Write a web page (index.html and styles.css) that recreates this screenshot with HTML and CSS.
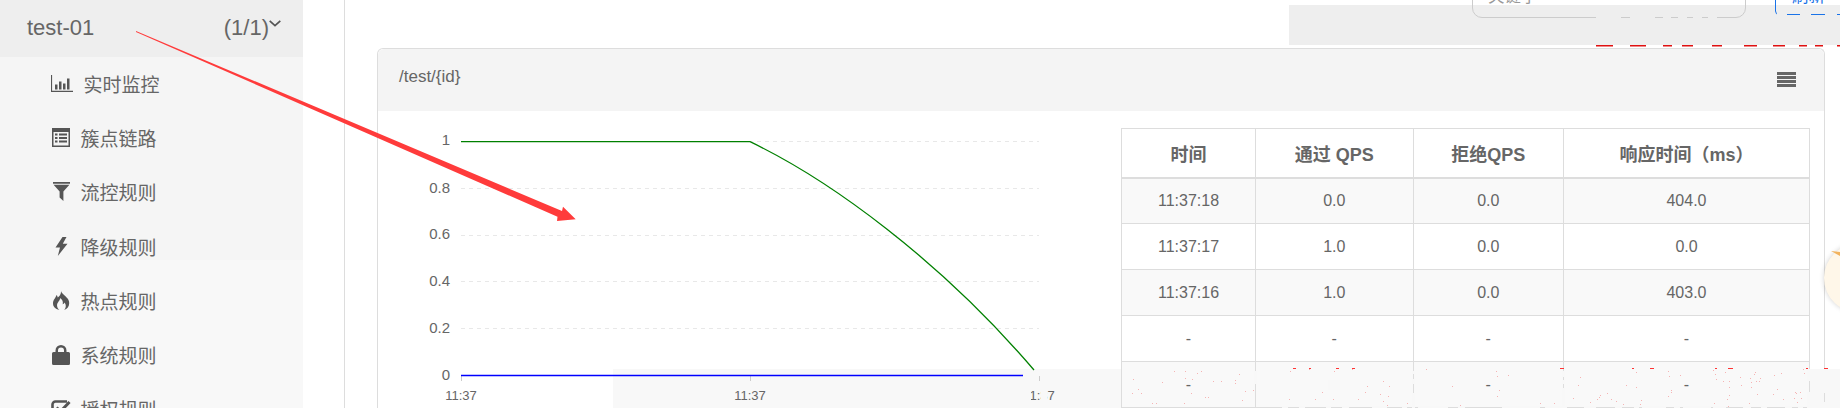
FILE: index.html
```html
<!DOCTYPE html>
<html lang="zh-CN">
<head>
<meta charset="utf-8">
<title>test-01</title>
<link rel="stylesheet" href="styles.css">
</head>
<body>
<div class="app">
  <aside class="sidebar">
    <div class="side-head">
      <span>test-01</span>
      <span class="side-count">(1/1)<svg class="chevron" width="12" height="7" viewBox="0 0 12 7"><path d="M.7.9 6 5.7 11.3.9" fill="none" stroke="#555" stroke-width="1.7"/></svg></span>
    </div>
    <nav class="side-nav">
      <a class="item item-wide"><span class="ico"><svg width="22" height="17" viewBox="0 0 22 17"><path d="M0 0h1.1v15.7H22V17H0zM4 9.500h2.500v5H4zM8 6.500h2.500v8H8zM12 8.500h2.500v6H12zM16 3.500h2.500v11H16z" fill="#555"/></svg></span><span class="label">实时监控</span></a>
      <a class="item"><span class="ico"><svg width="18" height="19" viewBox="0 0 18 19"><path fill-rule="evenodd" d="M0 0h18v19H0zM1.500 4v13.500h15V4zM3 5.500h2.500v2H3zM7 5.500h8v2H7zM3 9h2.500v2H3zM7 9h8v2H7zM3 12.500h2.500v2H3zM7 12.500h8v2H7z" fill="#555"/></svg></span><span class="label">簇点链路</span></a>
      <a class="item"><span class="ico"><svg width="17" height="19" viewBox="0 0 17 19"><path d="M0 0h17v1.800H0zM.6 2.800h15.800L10.400 9.500V19L6.600 15.500V9.500z" fill="#555"/></svg></span><span class="label">流控规则</span></a>
      <a class="item"><span class="ico"><svg width="13" height="19" viewBox="0 0 13 19"><path d="M7.500 0 .5 10.500H5L2.800 19 12.500 6.800H7.800L11.500 0z" fill="#555"/></svg></span><span class="label">降级规则</span></a>
      <a class="item"><span class="ico"><svg width="17" height="19" viewBox="0 0 17 19"><path fill-rule="evenodd" d="M8 0c1 3.500 5.500 5 7.500 9 1.800 4 0 8.500-4.500 10 2-2 2.500-5 .6-7.500-.5 1-1.100 1.500-2 1.800.8-2.500-.4-5-2.500-6.300.2 2.500-3.500 4.500-3 8 .2 1.800 1 3 2.400 4C2 18 0 15.500 0 12.500 0 8.500 2.800 7 3.500 4c.8.700 1.100 1.500 1.200 2.500C6.500 5 8.300 3 8 0z" fill="#555"/></svg></span><span class="label">热点规则</span></a>
      <a class="item"><span class="ico"><svg width="18" height="20" viewBox="0 0 18 20"><path fill-rule="evenodd" d="M3.500 7V5.500a5.500 5.500 0 0 1 11 0V7H16.500a1.500 1.500 0 0 1 1.500 1.500v10a1.500 1.500 0 0 1-1.500 1.500h-15A1.500 1.500 0 0 1 0 18.500v-10A1.500 1.500 0 0 1 1.500 7zM6 7h6V5.500a3 3 0 0 0-6 0z" fill="#555"/></svg></span><span class="label">系统规则</span></a>
      <a class="item"><span class="ico"><svg width="20" height="19" viewBox="0 0 20 19"><path d="M16 2.500H4.500A3 3 0 0 0 1.500 5.500v9a3 3 0 0 0 3 3h9a3 3 0 0 0 3-3V10" fill="none" stroke="#555" stroke-width="2.600"/><path d="M5.500 8.500 9.500 12.500 18.500 3" fill="none" stroke="#555" stroke-width="3"/></svg></span><span class="label">授权规则</span></a>
    </nav>
  </aside>

  <main class="main">
    <div class="toolbar">
      <div class="search"><span class="clip">关键字</span></div>
      <div class="refresh"><span class="clip">刷新</span></div>
    </div>
    <section class="panel">
      <header class="panel-head">
        <span class="panel-title">/test/{id}</span>
        <span class="burger"><i></i><i></i><i></i><i></i></span>
      </header>
      <div class="panel-body">
        <svg class="chart" width="743" height="297" viewBox="378 111 743 297">
          <g class="grid">
            <path d="M461 141.500H1039M461 188.500H1039M461 235.500H1039M461 281.500H1039M461 328.500H1039"/>
          </g>
          <path class="tick" d="M461.500 376v5M750.500 376v5M1039.500 376v5"/>
          <g class="ylabels">
            <text x="450" y="145">1</text>
            <text x="450" y="193">0.8</text>
            <text x="450" y="239">0.6</text>
            <text x="450" y="286">0.4</text>
            <text x="450" y="333">0.2</text>
            <text x="450" y="380">0</text>
          </g>
          <g class="xlabels">
            <text x="461" y="400">11:37</text>
            <text x="750" y="400">11:37</text>
            <text x="1039" y="400">11:37</text>
          </g>
          <path class="pass" d="M461 141.700H750C830 180 940 260 1034 370"/>
          <path class="block" d="M461 375.500H1023"/>
        </svg>
        <table class="stats">
          <colgroup><col class="c1"><col class="c2"><col class="c3"><col class="c4"></colgroup>
          <thead>
            <tr><th>时间</th><th>通过 QPS</th><th>拒绝QPS</th><th>响应时间（ms）</th></tr>
          </thead>
          <tbody>
            <tr class="odd"><td>11:37:18</td><td>0.0</td><td>0.0</td><td>404.0</td></tr>
            <tr><td>11:37:17</td><td>1.0</td><td>0.0</td><td>0.0</td></tr>
            <tr class="odd"><td>11:37:16</td><td>1.0</td><td>0.0</td><td>403.0</td></tr>
            <tr><td>-</td><td>-</td><td>-</td><td>-</td></tr>
            <tr class="odd"><td>-</td><td>-</td><td>-</td><td>-</td></tr>
          </tbody>
        </table>
      </div>
    </section>
  </main>

  <div class="shade-top"></div>
  <div class="shade-bottom"></div>
  <div class="bubble"></div>

  <svg class="marks" width="1840" height="408" viewBox="0 0 1840 408">
    <path class="gap-top" d="M1596 16h25v3h-25zM1630 16h25v3h-25zM1663 16h8v3h-8zM1678 16h9v3h-9zM1693 16h9v3h-9zM1708 16h9v3h-9zM1777 13h10v3h-10zM1800 13h11v3h-11zM1825 13h12v3h-12z"/>
    <path class="red" d="M1596 45h17v1.500h-17zM1630 45h16v1.500h-16zM1663 45h9v1.500h-9zM1682 45h11v1.500h-11zM1712 45h10v1.500h-10zM1744 45h13v1.500h-13zM1773 45h12v1.500h-12zM1799 45h8v1.500h-8zM1815 45h8v1.500h-8zM1837 45h3v1.500h-3z"/>
    <path class="gap-low" d="M1254 371h3v13h-3zM1412 371h3v3h-3zM1412 379h3v5h-3zM1412 393h3v15h-3zM1562 371h3v6h-3zM1562 380h3v4h-3zM1562 388h3v20h-3zM1807 369h3v12h-3zM1807 392h3v16h-3zM1328 380h12v10h-12zM1022 388h9v14h-9zM1041 388h6v14h-6zM1282 406h6v2h-6zM1299 406h6v2h-6zM1326 406h5v2h-5zM1342 406h7v2h-7zM1372 406h15v2h-15zM1402 406h5v2h-5zM1418 406h30v2h-30zM1458 406h7v2h-7zM1502 406h38v2h-38zM1545 406h22v2h-22zM1584 406h12v2h-12zM1615 406h7v2h-7zM1634 406h5v2h-5zM1642 406h24v2h-24zM1674 406h6v2h-6zM1683 406h28v2h-28zM1713 406h13v2h-13zM1743 406h8v2h-8zM1761 406h6v2h-6zM1785 406h7v2h-7zM1798 406h5v2h-5z"/>
    <path class="frag" d="M1824 393h1v9h-1z"/>
    <path class="red-low" d="M1293 368h3v1h-3zM1309 368h2v1h-2zM1336 368h3v1h-3zM1352 368h3v1h-3zM1560 368h4v1h-4zM1632 368h2v1h-2zM1650 368h4v1h-4zM1715 368h2v1h-2zM1728 368h5v1h-5zM1806 368h2v1h-2zM1824 368h4v1h-4z"/>
    <path class="dots" d="M1580 377h1v1h-1zM1578 385h1v1h-1zM1636 372h1v1h-1zM1626 385h1v1h-1zM1636 387h1v1h-1zM1668 371h1v1h-1zM1669 376h1v1h-1zM1680 375h1v1h-1zM1671 392h1v1h-1zM1671 390h1v1h-1zM1668 396h1v1h-1zM1641 400h1v1h-1zM1640 404h1v1h-1zM1623 404h1v1h-1zM1616 401h1v1h-1zM1611 399h1v1h-1zM1607 393h1v1h-1zM1600 395h1v1h-1zM1599 397h1v1h-1zM1597 399h1v1h-1zM1590 402h1v1h-1zM1573 398h1v1h-1zM1713 370h1v1h-1zM1715 374h1v1h-1zM1716 379h1v1h-1zM1725 372h1v1h-1zM1723 381h1v1h-1zM1729 381h1v1h-1zM1729 387h1v1h-1zM1729 395h1v1h-1zM1727 399h1v1h-1zM1714 403h1v1h-1zM1728 406h1v1h-1zM1741 385h1v1h-1zM1740 377h1v1h-1zM1749 403h1v1h-1zM1750 378h1v1h-1zM1751 382h1v1h-1zM1751 387h1v1h-1zM1754 374h1v1h-1zM1755 372h1v1h-1zM1756 381h1v1h-1zM1759 381h1v1h-1zM1760 378h1v1h-1zM1757 394h1v1h-1zM1773 394h1v1h-1zM1774 375h1v1h-1zM1781 373h1v1h-1zM1777 389h1v1h-1zM1783 399h1v1h-1zM1795 392h1v1h-1zM1796 393h1v1h-1zM1800 392h1v1h-1zM1794 398h1v1h-1zM1797 402h1v1h-1zM1801 398h1v1h-1zM1803 369h1v1h-1zM1804 373h1v1h-1zM1174 371h1v1h-1zM1185 371h1v1h-1zM1197 373h1v1h-1zM1201 371h1v1h-1zM1185 378h1v1h-1zM1192 379h1v1h-1zM1133 379h1v1h-1zM1162 382h1v1h-1zM1213 381h1v1h-1zM1221 381h1v1h-1zM1235 380h1v1h-1zM1235 383h1v1h-1zM1239 374h1v1h-1zM1245 391h1v1h-1zM1253 390h1v1h-1zM1138 389h1v1h-1zM1132 393h1v1h-1zM1141 393h1v1h-1zM1191 393h1v1h-1zM1205 397h1v1h-1zM1208 397h1v1h-1zM1242 400h1v1h-1zM1152 403h1v1h-1zM1156 403h1v1h-1zM1184 403h1v1h-1zM1290 371h1v1h-1zM1309 369h1v1h-1zM1334 371h1v1h-1zM1352 369h1v1h-1zM1322 392h1v1h-1zM1289 399h1v1h-1zM1315 399h1v1h-1zM1333 399h1v1h-1zM1358 399h1v1h-1zM1365 392h1v1h-1zM1367 386h1v1h-1zM1380 394h1v1h-1zM1383 381h1v1h-1zM1389 386h1v1h-1zM1388 396h1v1h-1zM1383 401h1v1h-1zM1387 405h1v1h-1zM1407 403h1v1h-1zM1426 369h1v1h-1zM1452 386h1v1h-1zM1460 405h1v1h-1zM1496 371h1v1h-1zM1497 376h1v1h-1zM1508 375h1v1h-1zM1499 390h1v1h-1zM1497 396h1v1h-1zM1540 403h1v1h-1zM1554 403h1v1h-1zM1573 398h1v1h-1z"/>
    <path class="flare" d="M1831 251l9 1v4z"/>
    <polygon class="arrow" points="136,31 562,211 563,206.700 575.700,219.300 557,221 557.500,216.700 136,32"/>
  </svg>
</div>
</body>
</html>
```

FILE: styles.css
```css
* { box-sizing: border-box; }

html, body {
  margin: 0;
  height: 408px;
  overflow: hidden;
  background: #fff;
}

body {
  font-family: "Liberation Sans", "Noto Sans CJK SC", sans-serif;
  color: #666;
}

.app {
  position: relative;
  display: flex;
  width: 1840px;
  height: 408px;
  overflow: hidden;
}

/* sidebar */
.sidebar {
  flex: 0 0 303px;
  height: 408px;
  background: linear-gradient(#f5f5f5 260px, #f8f8f8 260px);
}

.side-head {
  display: flex;
  justify-content: space-between;
  height: 57px;
  padding: 13px 22px 0 27px;
  background: #eee;
  font-size: 22px;
  line-height: 30px;
}

.side-count {
  display: flex;
  align-items: flex-start;
}

.chevron { margin-top: 7px; }

.side-nav { margin-top: -1px; }

.item {
  display: flex;
  align-items: center;
  height: 54.300px;
  padding-left: 51px;
  font-size: 19px;
  color: #666;
}

.ico {
  display: flex;
  flex: 0 0 20px;
  justify-content: center;
  margin-right: 9.500px;
}

.item-wide .label { margin-left: 1px; }

/* main column */
.main {
  flex: 1;
  min-width: 0;
  height: 408px;
  margin-left: 41px;
  border-left: 1px solid #ddd;
}

.toolbar {
  position: relative;
  z-index: 2;
  display: flex;
  align-items: flex-end;
  gap: 29px;
  height: 48px;
  padding: 0 0 30px 1127px;
}

.search {
  flex: 0 0 274px;
  height: 38px;
  padding-left: 15px;
  border: 1px solid #ccc;
  border-radius: 10px;
  color: #999;
  font-size: 16.500px;
}

.refresh {
  flex: 0 0 90px;
  height: 38px;
  margin-bottom: 3px;
  padding-left: 16px;
  border: 1px solid #1a73e8;
  border-radius: 4px;
  color: #1a73e8;
  font-size: 16.500px;
}

.clip {
  display: block;
  height: 25px;
  overflow: hidden;
  line-height: 30px;
}

.refresh .clip {
  height: 23px;
  margin-top: 4px;
  line-height: 28px;
}

/* panel */
.panel {
  width: 1448px;
  height: 400px;
  margin-left: 32px;
  border: 1px solid #ddd;
  border-bottom: 0;
  border-radius: 6px 6px 0 0;
  background: #fff;
}

.panel-head {
  display: flex;
  align-items: center;
  justify-content: space-between;
  height: 62px;
  padding: 0 28px 0 21px;
  border-radius: 6px 6px 0 0;
  background: #f4f4f4;
  font-size: 17px;
}

.panel-title { margin-top: -6px; }

.burger {
  display: flex;
  flex-direction: column;
  gap: 1px;
  width: 19px;
  margin-top: -2px;
}

.burger i {
  display: block;
  height: 3px;
  background: #666;
}

.panel-body {
  position: relative;
  z-index: 2;
  display: flex;
  align-items: flex-start;
}

.chart { flex: 0 0 743px; display: block; }

.grid path {
  fill: none;
  stroke: #e8e8e8;
  stroke-width: 1;
  stroke-dasharray: 4 4;
}

.tick { fill: none; stroke: #ccc; stroke-width: 1; }

.ylabels text {
  fill: #666;
  font-size: 15px;
  text-anchor: end;
}

.xlabels text {
  fill: #666;
  font-size: 13px;
  text-anchor: middle;
}

.pass { fill: none; stroke: #008000; stroke-width: 1.300; }
.block { fill: none; stroke: #0000ff; stroke-width: 1.600; }

/* table */
.stats {
  flex: 0 0 688px;
  width: 688px;
  margin-top: 17px;
  border-collapse: collapse;
  table-layout: fixed;
  font-size: 16px;
}

.c1 { width: 134px; }
.c2 { width: 157.500px; }
.c3 { width: 150.500px; }
.c4 { width: 246px; }

.stats th,
.stats td {
  padding: 0;
  border: 1px solid #ddd;
  text-align: center;
  color: #666;
}

.stats th {
  height: 49px;
  border-bottom-width: 2px;
  font-size: 18px;
  font-weight: 700;
}

.stats td { height: 46px; }

.odd td { background: #f9f9f9; }

/* overlays */
.shade-top {
  position: absolute;
  top: 5px;
  left: 1289px;
  right: 0;
  height: 40px;
  z-index: 1;
  background: #eee;
}

.shade-bottom {
  position: absolute;
  top: 369px;
  left: 613px;
  right: 0;
  bottom: 0;
  z-index: 1;
  background: #f8f8f8;
}

.bubble {
  position: absolute;
  top: 243px;
  left: 1824px;
  width: 72px;
  height: 70px;
  z-index: 3;
  border-radius: 50%;
  background: #fff7e9;
  box-shadow: 0 0 5px rgba(0, 0, 0, .18);
}

.marks {
  position: absolute;
  top: 0;
  left: 0;
  z-index: 4;
  pointer-events: none;
}

.gap-top { fill: #eee; }
.gap-low { fill: #f8f8f8; }
.frag { fill: #ddd; }
.red { fill: #e01010; }
.red-low { fill: #f33; }
.dots { fill: #f5b4b4; }
.flare { fill: #f2b35e; }
.arrow { fill: #ff3b3b; }
```
